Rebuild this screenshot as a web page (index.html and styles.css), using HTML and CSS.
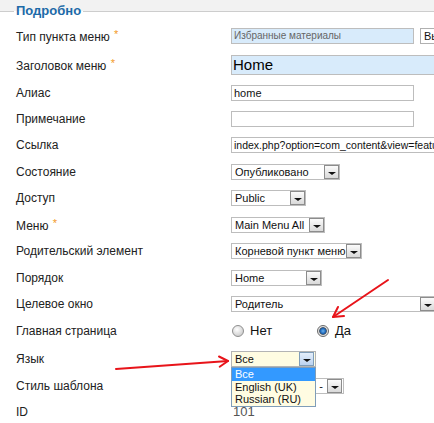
FILE: index.html
```html
<!DOCTYPE html>
<html lang="ru">
<head>
<meta charset="utf-8">
<title>Подробно</title>
<link rel="stylesheet" href="styles.css">
</head>
<body>
<div class="page">
  <fieldset class="panel">
    <legend>Подробно</legend>
    <div class="form">
      <div class="lbl">Тип пункта меню <span class="star">*</span></div>
      <div class="field gap6"><span class="inp ro w183">Избранные материалы</span><span class="pick">Выбрать</span></div>

      <div class="lbl">Заголовок меню <span class="star">*</span></div>
      <div class="field"><span class="inp big">Home</span></div>

      <div class="lbl">Алиас</div>
      <div class="field"><span class="inp w183">home</span></div>

      <div class="lbl">Примечание</div>
      <div class="field"><span class="inp w183"></span></div>

      <div class="lbl">Ссылка</div>
      <div class="field"><span class="inp long link">index.php?option=com_content&amp;view=featured</span></div>

      <div class="lbl">Состояние</div>
      <div class="field"><span class="sel w109"><span class="t">Опубликовано</span><span class="ar"></span></span></div>

      <div class="lbl">Доступ</div>
      <div class="field"><span class="sel w75"><span class="t">Public</span><span class="ar"></span></span></div>

      <div class="lbl">Меню <span class="star">*</span></div>
      <div class="field"><span class="sel w94"><span class="t">Main Menu All</span><span class="ar"></span></span></div>

      <div class="lbl">Родительский элемент</div>
      <div class="field"><span class="sel w131"><span class="t">Корневой пункт меню</span><span class="ar"></span></span></div>

      <div class="lbl">Порядок</div>
      <div class="field"><span class="sel w91"><span class="t">Home</span><span class="ar"></span></span></div>

      <div class="lbl">Целевое окно</div>
      <div class="field"><span class="sel w205"><span class="t">Родитель</span><span class="ar"></span></span></div>

      <div class="lbl">Главная страница</div>
      <div class="field">
        <span class="radio first"><span class="rb"></span>Нет</span>
        <span class="radio"><span class="rb on"></span>Да</span>
      </div>

      <div class="lbl">Язык</div>
      <div class="field">
        <span class="sel focus w85"><span class="t">Все</span><span class="ar blue"></span></span>
        <div class="dd">
          <div class="opt hl">Все</div>
          <div class="opt">English (UK)</div>
          <div class="opt">Russian (RU)</div>
        </div>
      </div>

      <div class="lbl">Стиль шаблона</div>
      <div class="field"><span class="sel w113"><span class="t tpl">- По умолчанию -</span><span class="ar"></span></span></div>

      <div class="lbl">ID</div>
      <div class="field"><span class="id">101</span></div>
    </div>
  </fieldset>

  <svg class="arrows" width="434" height="423" viewBox="0 0 434 423">
    <g fill="none" stroke="#e8141a" stroke-width="2" stroke-linecap="round" stroke-linejoin="round">
      <path d="M388 280 L333 317"/>
      <path d="M344 316 L333 317 L338 307"/>
      <path d="M116 369 L228 361"/>
      <path d="M219 356.5 L228 361 L219.7 366.8"/>
    </g>
  </svg>
</div>
</body>
</html>
```

FILE: styles.css
```css
html, body {
  margin: 0;
  padding: 0;
}

body {
  width: 434px;
  height: 423px;
  overflow: hidden;
  font-family: "Liberation Sans", Arial, sans-serif;
  background: #fff;
}

.page {
  position: relative;
  box-sizing: border-box;
  height: 423px;
  padding-top: 3px;
  background: #f2f2f2;
}

.panel {
  margin: 0;
  padding: 3px 0 0 14px;
  border: 0;
  border-top: 1px solid #cdcdcd;
  background: #fff;
  min-width: 0;
}

.panel legend {
  padding: 0 2px;
  font-size: 13px;
  line-height: 16px;
  font-weight: bold;
  color: #1d6aa8;
}

.form {
  display: grid;
  grid-template-columns: 217px 1fr;
  grid-template-rows: 28px 29px 27px 26px 26px 27px 26.5px 26.5px 26.5px 26.5px 26px 27.5px 28px 26px 26px;
  align-items: center;
}

.lbl {
  padding-left: 2px;
  font-size: 12px;
  color: #222;
  white-space: nowrap;
}

.star {
  color: #f39a1e;
  font-size: 11px;
  vertical-align: 3px;
  margin-left: 1px;
}

.field {
  position: relative;
  display: flex;
  align-items: center;
  white-space: nowrap;
  min-width: 0;
}

.gap6 {
  gap: 6px;
}

.inp {
  box-sizing: border-box;
  display: block;
  flex: none;
  height: 16px;
  border: 1px solid #bdbdbd;
  background: #fff;
  font-size: 11px;
  line-height: 14px;
  padding: 0 2px;
  color: #111;
  overflow: hidden;
}

.w183 { width: 183px; }
.long { width: 215px; }

.link {
  font-size: 10.5px;
}

.ro {
  background: #d8ebfb;
  color: #666;
  font-size: 10px;
}

.big {
  width: 215px;
  height: 20px;
  font-size: 15px;
  line-height: 18px;
  padding: 0 1px;
  background: #d8ebfb;
  color: #000;
}

.pick {
  box-sizing: border-box;
  flex: none;
  height: 16px;
  border: 1px solid #b0b0b0;
  background: #fff;
  font-size: 11px;
  line-height: 14px;
  padding: 0 3px;
  color: #111;
}

.sel {
  box-sizing: border-box;
  display: flex;
  flex: none;
  align-items: center;
  height: 16px;
  border: 1px solid #bdbdbd;
  background: #fff;
  font-size: 11px;
  color: #111;
}

.sel .t {
  flex: 1;
  min-width: 0;
  padding-left: 3px;
  overflow: hidden;
  white-space: nowrap;
  line-height: 14px;
}

.sel .t.tpl {
  text-align: right;
  padding-right: 8px;
}

.sel .ar {
  box-sizing: border-box;
  flex: none;
  width: 15px;
  height: 14px;
  border: 1px solid #8c8c8c;
  background: linear-gradient(#fbfbfb, #d9d9d9);
  display: flex;
  justify-content: center;
  align-items: flex-end;
  padding-bottom: 3px;
}

.sel .ar::after {
  content: "";
  width: 0;
  height: 0;
  border-left: 4px solid transparent;
  border-right: 4px solid transparent;
  border-top: 3px solid #111;
}

.w75 { width: 75px; }
.w85 { width: 85px; }
.w91 { width: 91px; }
.w94 { width: 94px; }
.w109 { width: 109px; }
.w113 { width: 113px; }
.w131 { width: 131px; }
.w205 { width: 205px; }

.sel.w113 .ar { margin-right: 1px; }

.sel.focus {
  background: #fffce2;
  border-color: #b4b4b4;
}

.sel .ar.blue {
  margin-right: 1px;
  border-color: #7f9db9;
  background: linear-gradient(#e4eefa, #bcd3f1);
}

.radio {
  display: inline-flex;
  align-items: center;
  gap: 6px;
  font-size: 13px;
  color: #111;
}

.radio.first {
  width: 85px;
  margin-left: 1px;
}

.rb {
  box-sizing: border-box;
  width: 12px;
  height: 12px;
  border-radius: 50%;
  border: 1px solid #8e8e8e;
  background: radial-gradient(circle at 40% 35%, #ffffff, #d2d2d2 70%);
}

.rb.on {
  border-color: #6a6a6a;
  background: radial-gradient(circle at 50% 50%, #6bb3f0 0, #1d66b8 2.6px, #3a4d63 3.4px, #dcdcdc 4.2px, #eeeeee 6px);
}

.dd {
  position: absolute;
  left: 0;
  top: 100%;
  z-index: 2;
  box-sizing: border-box;
  width: 85px;
  border: 1px solid #7f9db9;
  background: #fffce2;
  font-size: 11px;
  color: #111;
}

.opt {
  height: 12.5px;
  line-height: 12.5px;
  padding-left: 3px;
}

.opt.hl {
  height: 13px;
  line-height: 13px;
  background: #3399ff;
  color: #fff;
}

.id {
  padding-left: 2px;
  font-size: 13px;
  color: #555;
}

.arrows {
  position: absolute;
  left: 0;
  top: 0;
  pointer-events: none;
  z-index: 3;
}
```
